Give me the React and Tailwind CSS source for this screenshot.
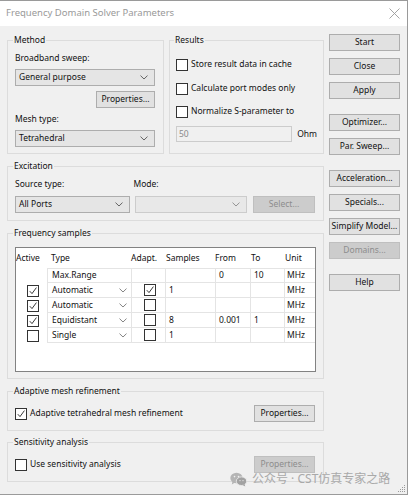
import React from "react";

const Check = ({ checked }) => (
  <span className="w-[12px] h-[12px] border border-[#333333] bg-white flex items-center justify-center shrink-0">
    {checked && (
      <svg width="10" height="10" viewBox="0 0 10 10">
        <path d="M1.8 5.2 L4 7.6 L8.4 1.6" stroke="#222" strokeWidth="0.9" fill="none" />
      </svg>
    )}
  </span>
);

const Chevron = ({ color = "#555" }) => (
  <svg width="8" height="5" viewBox="0 0 8 5" className="shrink-0">
    <path d="M0.5 0.6 L4 4 L7.5 0.6" stroke={color} strokeWidth="0.9" fill="none" />
  </svg>
);

const Dropdown = ({ text, w, disabled }) => (
  <div
    className={`h-[17px] border flex items-center justify-between pl-[3px] pr-[6px] ${w} ${
      disabled ? "border-[#cccccc] bg-[#e8e8e8]" : "border-[#adadad] bg-[#e5e5e5]"
    }`}
  >
    <span>{text}</span>
    <Chevron color={disabled ? "#8a8a8a" : "#555"} />
  </div>
);

const Btn = ({ children, w = "w-full", disabled }) => (
  <div
    className={`h-[17px] border flex items-center justify-center shrink-0 ${w} ${
      disabled ? "border-[#bfbfbf] bg-[#cccccc] text-[#8d8d8d]" : "border-[#adadad] bg-[#e1e1e1] text-[#111]"
    }`}
  >
    {children}
  </div>
);

const Group = ({ label, className, children }) => (
  <fieldset className={`border border-[#dcdcdc] min-w-0 ${className}`}>
    <legend className="-ml-[2px] px-[1px] leading-[12px] text-[#111]">{label}</legend>
    {children}
  </fieldset>
);

const cols = [
  "w-[31px]",
  "w-[84px]",
  "w-[34px]",
  "w-[50px]",
  "w-[35px]",
  "w-[34px]",
  "w-[31px]",
];

const rows = [
  { active: true, type: "Automatic", adapt: true, samples: "1", from: "", to: "" },
  { active: true, type: "Automatic", adapt: false, samples: "", from: "", to: "" },
  { active: true, type: "Equidistant", adapt: false, samples: "8", from: "0.001", to: "1" },
  { active: false, type: "Single", adapt: false, samples: "1", from: "", to: "" },
];

const cell = "h-[15px] border-l border-b border-[#e4e4e4] flex items-center shrink-0";

export default function App() {
  return (
    <div
      className="w-[408px] h-[495px] bg-[#f0f0f0] border-t border-r border-b border-[#9a9a9a] flex flex-col overflow-hidden relative text-[8.5px] text-[#111]"
      style={{ fontFamily: '"Noto Sans", "Noto Sans CJK SC", sans-serif' }}
    >
      {/* Title bar */}
      <div className="h-[25px] bg-white flex items-center justify-between pl-[6px] pr-[7px] shrink-0">
        <span className="text-[9.5px] text-[#999999]">Frequency Domain Solver Parameters</span>
        <svg width="11" height="11" viewBox="0 0 11 11">
          <path d="M0.5 0.5 L10.5 10.5 M10.5 0.5 L0.5 10.5" stroke="#9a9a9a" strokeWidth="0.9" />
        </svg>
      </div>

      <div className="flex flex-1 pl-[7px]">
        {/* Left column */}
        <div className="w-[317px] flex flex-col pt-[8px]">
          <div className="flex gap-[5px]">
            <Group label="Method" className="w-[157px] h-[120px] pl-[7px] pr-[8px] pt-[6px]">
              <div className="flex flex-col">
                <div className="leading-[12px]">Broadband sweep:</div>
                <div className="mt-[5px]">
                  <Dropdown text="General purpose" w="w-full" />
                </div>
                <div className="mt-[5px] flex justify-end">
                  <Btn w="w-[59px]">Properties...</Btn>
                </div>
                <div className="mt-[5px] leading-[12px]">Mesh type:</div>
                <div className="mt-[5px]">
                  <Dropdown text="Tetrahedral" w="w-full" />
                </div>
              </div>
            </Group>
            <Group label="Results" className="w-[155px] h-[120px] pl-[6px] pr-[6px] pt-[6px]">
              <div className="flex flex-col">
                <div className="flex items-center gap-[3px] h-[13px] mt-[6px]">
                  <Check />
                  <span>Store result data in cache</span>
                </div>
                <div className="flex items-center gap-[3px] h-[13px] mt-[11px]">
                  <Check />
                  <span>Calculate port modes only</span>
                </div>
                <div className="flex items-center gap-[3px] h-[13px] mt-[10px]">
                  <Check />
                  <span>Normalize S-parameter to</span>
                </div>
                <div className="flex items-center mt-[8px]">
                  <div className="w-[117px] h-[16px] border border-[#cccccc] bg-[#f0f0f0] text-[#8a8a8a] flex items-center pl-[2px]">
                    50
                  </div>
                  <span className="ml-[5px]">Ohm</span>
                </div>
              </div>
            </Group>
          </div>

          <Group label="Excitation" className="mt-[6px] h-[61px] pl-[7px] pr-[8px] pt-[6px]">
            <div className="flex items-start">
              <div className="flex flex-col w-[115px]">
                <div className="leading-[12px]">Source type:</div>
                <div className="mt-[6px]">
                  <Dropdown text="All Ports" w="w-full" />
                </div>
              </div>
              <div className="flex flex-col w-[114px] ml-[4px]">
                <div className="leading-[12px]">Mode:</div>
                <div className="mt-[6px] ml-[1px]">
                  <Dropdown text="" w="w-full" disabled />
                </div>
              </div>
              <div className="flex flex-col ml-[6px]">
                <div className="leading-[12px]">&nbsp;</div>
                <div className="mt-[6px]">
                  <Btn w="w-[62px]" disabled>Select...</Btn>
                </div>
              </div>
            </div>
          </Group>

          <Group label="Frequency samples" className="mt-[6px] h-[152px] pl-[7px] pr-[7px] pt-[8px]">
            <div className="w-[301px] h-[125px] border border-[#828282] bg-white flex flex-col">
              {/* Header */}
              <div className="h-[20px] flex items-center">
                <div className={`${cols[0]} pl-[0px]`}>Active</div>
                <div className={`${cols[1]} pl-[4px]`}>Type</div>
                <div className={`${cols[2]} pl-[0px]`}>Adapt.</div>
                <div className={`${cols[3]} pl-[1px]`}>Samples</div>
                <div className={`${cols[4]} pl-[0px]`}>From</div>
                <div className={`${cols[5]} pl-[1px]`}>To</div>
                <div className={`${cols[6]} pl-[1px]`}>Unit</div>
              </div>
              {/* Max range */}
              <div className="flex">
                <div className={`${cols[0]} h-[15px]`} />
                <div className={`${cols[1]} ${cell} border-t pl-[4px]`}>Max.Range</div>
                <div className={`${cols[2]} ${cell} border-t`} />
                <div className={`${cols[3]} ${cell} border-t`} />
                <div className={`${cols[4]} ${cell} border-t pl-[3px]`}>0</div>
                <div className={`${cols[5]} ${cell} border-t pl-[3px]`}>10</div>
                <div className={`${cols[6]} ${cell} border-t pl-[2px]`}>MHz</div>
              </div>
              {rows.map((r, i) => (
                <div className="flex" key={i}>
                  <div className={`${cols[0]} h-[15px] flex items-center justify-center pl-[2px]`}>
                    <Check checked={r.active} />
                  </div>
                  <div className={`${cols[1]} ${cell} justify-between pl-[4px] pr-[4px]`}>
                    <span>{r.type}</span>
                    <Chevron color="#777" />
                  </div>
                  <div className={`${cols[2]} ${cell} justify-center pl-[2px]`}>
                    <Check checked={r.adapt} />
                  </div>
                  <div className={`${cols[3]} ${cell} pl-[3px]`}>{r.samples}</div>
                  <div className={`${cols[4]} ${cell} pl-[3px]`}>{r.from}</div>
                  <div className={`${cols[5]} ${cell} pl-[3px]`}>{r.to}</div>
                  <div className={`${cols[6]} ${cell} pl-[2px]`}>MHz</div>
                </div>
              ))}
            </div>
          </Group>

          <Group label="Adaptive mesh refinement" className="mt-[6px] h-[46px] pl-[7px] pr-[8px] pt-[8px]">
            <div className="flex items-center justify-between h-[17px]">
              <div className="flex items-center gap-[3px]">
                <Check checked />
                <span>Adaptive tetrahedral mesh refinement</span>
              </div>
              <Btn w="w-[61px]">Properties...</Btn>
            </div>
          </Group>

          <Group label="Sensitivity analysis" className="mt-[5px] h-[46px] pl-[7px] pr-[8px] pt-[8px]">
            <div className="flex items-center justify-between h-[17px]">
              <div className="flex items-center gap-[3px]">
                <Check />
                <span>Use sensitivity analysis</span>
              </div>
              <Btn w="w-[61px]" disabled>Properties...</Btn>
            </div>
          </Group>
        </div>

        {/* Right column buttons */}
        <div className="w-[71px] ml-[5px] pt-[8px] flex flex-col">
          <Btn>Start</Btn>
          <div className="mt-[7px]"><Btn>Close</Btn></div>
          <div className="mt-[7px]"><Btn>Apply</Btn></div>
          <div className="mt-[15px]"><Btn>Optimizer...</Btn></div>
          <div className="mt-[7px]"><Btn>Par. Sweep...</Btn></div>
          <div className="mt-[15px]"><Btn>Acceleration...</Btn></div>
          <div className="mt-[7px]"><Btn>Specials...</Btn></div>
          <div className="mt-[7px]"><Btn>Simplify Model...</Btn></div>
          <div className="mt-[7px]"><Btn disabled>Domains...</Btn></div>
          <div className="mt-[15px]"><Btn>Help</Btn></div>
        </div>
      </div>

      {/* Watermark */}
      <div className="absolute left-[230px] top-[470px] flex items-center gap-[5px] text-[#a9a9a9] text-[12px] leading-[16px]">
        <svg width="17" height="15" viewBox="0 0 17 15">
          <ellipse cx="6.5" cy="6" rx="6.2" ry="5.2" fill="#b5b5b5" />
          <path d="M2.5 9.5 L1.8 12.5 L5 10.5 Z" fill="#b5b5b5" />
          <ellipse cx="11.5" cy="9.2" rx="5.2" ry="4.3" fill="#a2a2a2" stroke="#f0f0f0" strokeWidth="0.8" />
          <path d="M14.5 12 L15.3 14.5 L12.5 13 Z" fill="#a2a2a2" />
          <circle cx="4.5" cy="4.6" r="0.8" fill="#f0f0f0" />
          <circle cx="8.5" cy="4.6" r="0.8" fill="#f0f0f0" />
          <circle cx="10" cy="8.6" r="0.6" fill="#f0f0f0" />
          <circle cx="13" cy="8.6" r="0.6" fill="#f0f0f0" />
        </svg>
        <span>公众号 · CST仿真专家之路</span>
      </div>

      {/* Resize grip */}
      <svg className="absolute right-[1px] bottom-[1px]" width="8" height="8" viewBox="0 0 8 8">
        <rect x="6" y="0" width="1" height="1" fill="#9a9a9a" />
        <rect x="4" y="2" width="1" height="1" fill="#9a9a9a" />
        <rect x="6" y="2" width="1" height="1" fill="#9a9a9a" />
        <rect x="2" y="4" width="1" height="1" fill="#9a9a9a" />
        <rect x="4" y="4" width="1" height="1" fill="#9a9a9a" />
        <rect x="6" y="4" width="1" height="1" fill="#9a9a9a" />
        <rect x="0" y="6" width="1" height="1" fill="#9a9a9a" />
        <rect x="2" y="6" width="1" height="1" fill="#9a9a9a" />
        <rect x="4" y="6" width="1" height="1" fill="#9a9a9a" />
        <rect x="6" y="6" width="1" height="1" fill="#9a9a9a" />
      </svg>
    </div>
  );
}
